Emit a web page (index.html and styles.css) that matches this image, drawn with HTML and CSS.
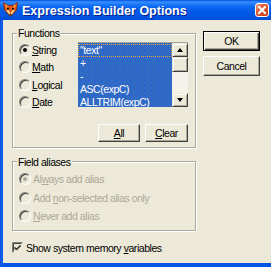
FILE: index.html
```html
<!DOCTYPE html>
<html>
<head>
<meta charset="utf-8">
<link rel="stylesheet" href="styles.css">
</head>
<body>
<div class="window">
  <div class="titlebar">
    <svg class="app-icon" width="15" height="15" viewBox="0 0 15 15">
      <path d="M0.5 0.5 L5 3.5 L10 3.5 L14.5 0.5 L13.5 8 L7.5 14.5 L1.5 8 Z" fill="#E2561C" stroke="#7A2A08" stroke-width="0.8"/>
      <path d="M2.5 2 L4.5 4 L3 6 Z M12.5 2 L10.5 4 L12 6 Z" fill="#F6C44A"/>
      <path d="M3 8 L6 8.5 L7.5 12.5 L9 8.5 L12 8 L9.5 11.5 L7.5 13.5 L5.5 11.5 Z" fill="#F9E08A"/>
      <rect x="4" y="6" width="2" height="1.5" fill="#1A1A1A"/>
      <rect x="9" y="6" width="2" height="1.5" fill="#1A1A1A"/>
      <rect x="6.5" y="12" width="2" height="1.5" fill="#3A1A0A"/>
    </svg>
    <span class="title">Expression Builder Options</span>
    <span class="close">
      <svg width="12" height="12" viewBox="0 0 12 12"><path d="M3 3 L9 9 M9 3 L3 9" stroke="#fff" stroke-width="2" stroke-linecap="square"/></svg>
    </span>
  </div>
  <div class="body">
    <div class="left">
      <div class="group functions">
        <span class="group-label">Functions</span>
        <div class="func-row">
          <div class="radios">
            <div class="radio"><span class="circle checked"></span><span><u>S</u>tring</span></div>
            <div class="radio"><span class="circle"></span><span><u>M</u>ath</span></div>
            <div class="radio"><span class="circle"></span><span><u>L</u>ogical</span></div>
            <div class="radio"><span class="circle"></span><span><u>D</u>ate</span></div>
          </div>
          <div class="listbox">
            <ul class="items">
              <li class="focus">"text"</li>
              <li>+</li>
              <li>-</li>
              <li>ASC(expC)</li>
              <li>ALLTRIM(expC)</li>
            </ul>
            <div class="scrollbar">
              <div class="sb-btn up"></div>
              <div class="sb-thumb"></div>
              <div class="sb-track"></div>
              <div class="sb-btn down"></div>
            </div>
          </div>
        </div>
        <div class="btn-row">
          <button class="btn small all"><u>A</u>ll</button>
          <button class="btn small clear"><u>C</u>lear</button>
        </div>
      </div>
      <div class="group aliases">
        <span class="group-label">Field aliases</span>
        <div class="radio disabled"><span class="circle checked"></span><span>Al<u>w</u>ays add alias</span></div>
        <div class="radio disabled"><span class="circle"></span><span>Add <u>n</u>on-selected alias only</span></div>
        <div class="radio disabled"><span class="circle"></span><span><u>N</u>ever add alias</span></div>
      </div>
      <div class="check">
        <svg class="checkbox" width="11" height="11" viewBox="0 0 11 11">
          <rect x="0" y="0" width="11" height="11" fill="#ECE9D8"/>
          <path d="M0.5 10.5 V0.5 H10.5" fill="none" stroke="#808080"/>
          <path d="M1.5 9.5 V1.5 H9.5" fill="none" stroke="#404040"/>
          <path d="M2.5 5 L4.5 7 L8.5 3 M2.5 6 L4.5 8 L8.5 4" fill="none" stroke="#000" stroke-width="1"/>
        </svg>
        <span>Show system memory <u>v</u>ariables</span>
      </div>
    </div>
    <div class="right">
      <button class="btn default">OK</button>
      <button class="btn">Cancel</button>
    </div>
  </div>
</div>
</body>
</html>
```
FILE: styles.css
```css
* { box-sizing: border-box; }
html, body { margin: 0; padding: 0; }
body {
  width: 271px;
  height: 267px;
  overflow: hidden;
  font-family: "Liberation Sans", Arial, sans-serif;
  font-size: 10.5px;
  letter-spacing: -0.45px;
  color: #000;
}
.window {
  width: 271px;
  height: 267px;
  background: linear-gradient(to right, #0A3FC8 0px, #1866F0 1px, #0055E5 3px);
  display: flex;
  flex-direction: column;
}
.titlebar {
  height: 20px;
  flex: none;
  display: flex;
  align-items: flex-start;
  color: #fff;
  background: linear-gradient(to bottom, #0052E0 0%, #3A8FFF 10%, #1F7CFA 20%, #0A67F0 35%, #005BE8 55%, #0055E3 80%, #004CD6 100%);
}
.app-icon { margin: 2px 0 0 3px; flex: none; }
.title {
  margin-left: 4px;
  padding-top: 3px;
  line-height: 16px;
  font-family: "Liberation Sans", Arial, sans-serif;
  font-weight: bold;
  font-size: 12.5px;
  letter-spacing: 0;
  text-shadow: 1px 1px 0 #0A1F8F;
  white-space: nowrap;
}
.close {
  margin: 3px 2px 0 auto;
  width: 14px;
  height: 14px;
  flex: none;
  border: 1px solid #fff;
  border-radius: 3px;
  background: linear-gradient(135deg, #EE9A7E 0%, #E0582E 40%, #C83A10 100%);
  display: flex;
  align-items: center;
  justify-content: center;
}
.body {
  flex: 1;
  margin: 0 0 4px 3px;
  background: #ECE9D8;
  display: flex;
  align-items: flex-start;
  padding: 11px 0 0 9px;
}
.left {
  width: 184px;
  margin-top: 2px;
  display: flex;
  flex-direction: column;
}
.right {
  margin-left: 7px;
  display: flex;
  flex-direction: column;
  gap: 5px;
}
.group {
  position: relative;
  border: 1px solid #ACA899;
  box-shadow: inset 1px 1px 0 #fff, 1px 1px 0 #fff;
}
.group-label {
  position: absolute;
  top: -7px;
  left: 4px;
  padding: 0 1px;
  background: #ECE9D8;
  line-height: 13px;
  white-space: nowrap;
}
.functions { padding: 8px 7px 5px 6px; }
.func-row { display: flex; justify-content: space-between; align-items: flex-start; }
.radios { margin-top: -1px; display: flex; flex-direction: column; }
.radio {
  height: 17.5px;
  display: flex;
  align-items: center;
  gap: 1px;
  white-space: nowrap;
}
.circle {
  width: 12px;
  height: 12px;
  flex: none;
  border-radius: 50%;
  border: 1px solid;
  border-color: #808080 #fff #fff #808080;
  box-shadow: inset 1px 1px 0 #404040;
  position: relative;
}
.circle.checked::after {
  content: "";
  position: absolute;
  left: 3px;
  top: 3px;
  width: 4px;
  height: 4px;
  border-radius: 50%;
  background: #000;
}
.listbox {
  width: 110px;
  height: 65px;
  display: flex;
  border-top: 1px solid #A7A69B;
}
.items {
  flex: 1;
  margin: 0;
  padding: 1px 0 0 0;
  list-style: none;
  overflow: hidden;
  color: #fff;
  font-size: 10.5px;
  background-color: #316AC5;
  background-image: radial-gradient(circle, #1A56E8 0.6px, transparent 0.9px);
  background-size: 7px 5px;
}
.items li {
  height: 13px;
  line-height: 13px;
  padding-left: 2px;
  white-space: nowrap;
}
.items li.focus {
  border: 1px dotted #EFA43A;
  line-height: 11px;
  padding-left: 1px;
}
.scrollbar {
  width: 16px;
  flex: none;
  display: flex;
  flex-direction: column;
}
.sb-btn, .sb-thumb {
  background: #ECE9D8;
  border: 1px solid;
  border-color: #ECE9D8 #404040 #404040 #ECE9D8;
  box-shadow: inset 1px 1px 0 #fff, inset -1px -1px 0 #ACA899;
  position: relative;
}
.sb-btn { height: 14px; }
.sb-thumb { height: 15px; }
.sb-track { flex: 1; background: #F4F2EA; }
.sb-btn::after {
  content: "";
  position: absolute;
  left: 4px;
  width: 0;
  height: 0;
  border-left: 3.5px solid transparent;
  border-right: 3.5px solid transparent;
}
.sb-btn.up::after { top: 4px; border-bottom: 4px solid #000; }
.sb-btn.down::after { top: 4px; border-top: 4px solid #000; }
.btn-row {
  display: flex;
  justify-content: flex-end;
  gap: 5px;
  margin-top: 13px;
}
.btn {
  font: inherit;
  letter-spacing: inherit;
  color: #000;
  padding: 0;
  margin: 0;
  background: #ECE9D8;
  border: 1px solid;
  border-color: #fff #404040 #404040 #fff;
  box-shadow: inset -1px -1px 0 #ACA899;
  width: 57px;
  height: 20px;
  line-height: 16px;
  text-align: center;
}
.btn.small { height: 18px; line-height: 14px; }
.btn.all { width: 42px; }
.btn.clear { width: 43px; }
.btn.default {
  border: 1px solid #000;
  box-shadow: inset 1px 1px 0 #fff, inset -1px -1px 0 #404040, inset -2px -2px 0 #ACA899;
}
.aliases {
  margin-top: 13px;
  padding: 8px 6px 4.5px 6px;
}
.aliases .group-label { top: -6px; }
.aliases .radio { height: 18.5px; gap: 2px; }
.radio.disabled { color: #ACA899; }
.radio.disabled .circle.checked::after { background: #ACA899; }
.check {
  margin-top: 10px;
  height: 13px;
  display: flex;
  align-items: center;
  gap: 3px;
  white-space: nowrap;
}
.checkbox { flex: none; }
```
